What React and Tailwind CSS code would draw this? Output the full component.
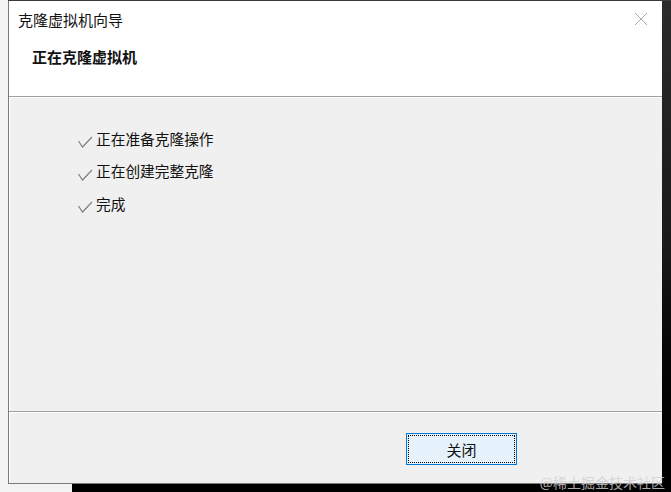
export default function App() {
  const font = { fontFamily: '"Noto Sans CJK SC", "Microsoft YaHei", sans-serif' };
  const items = ["正在准备克隆操作", "正在创建完整克隆", "完成"];
  return (
    <div className="relative w-[671px] h-[492px] bg-black overflow-hidden" style={font}>
      <div className="absolute left-0 top-0 w-[8px] h-full bg-[#f3f3f3]" />
      <div className="absolute left-0 bottom-0 w-[72px] h-[9px] bg-[#f3f3f3]" />
      <div className="absolute right-0 top-0 w-[9px] h-full bg-linear-to-b from-[#2b2b2b] via-[#1a1a1a] to-black" />
      <div className="absolute left-[8px] top-0 right-0 h-px bg-[#3a3a3a]" />

      <div className="relative ml-[8px] mt-[1px] w-[654px] h-[483px] border-l border-b border-[#7a7a7a] flex flex-col text-[#111]">
        <div className="h-[95px] bg-white flex flex-col shrink-0">
          <div className="h-[36px] flex items-center justify-between pl-[9px] pr-[14px]">
            <span className="text-[15px] leading-none">克隆虚拟机向导</span>
            <svg width="14" height="14" viewBox="0 0 14 14">
              <path d="M1 1 L13 13 M13 1 L1 13" stroke="#a8a8a8" strokeWidth="1" fill="none" />
            </svg>
          </div>
          <div className="h-[38px] flex items-center pl-[23px]">
            <span className="text-[15px] font-bold leading-none">正在克隆虚拟机</span>
          </div>
        </div>
        <div className="h-px bg-[#a0a0a0] shrink-0" />
        <div className="h-px bg-white shrink-0" />
        <div className="flex-1 bg-[#f0f0f0] pt-[25px] pl-[68px] border-l border-white">
          {items.map((t) => (
            <div key={t} className="h-[32.5px] flex items-center">
              <svg width="15" height="12" viewBox="0 0 15 12" className="mt-[6px] mr-[3px]">
                <polyline points="0.5,5 4.5,11 14,1" stroke="#7a7a7a" strokeWidth="1.1" fill="none" />
              </svg>
              <span className="text-[14.7px] leading-none">{t}</span>
            </div>
          ))}
        </div>
        <div className="h-px bg-[#a0a0a0] shrink-0" />
        <div className="h-px bg-white shrink-0" />
        <div className="h-[70px] bg-[#f0f0f0] shrink-0 flex justify-end items-start pt-[20px] pr-[145px] border-l border-white">
          <button className="w-[111px] h-[32px] border border-[#0078d7] bg-[#e5f1fb] p-[1px]">
            <div className="w-full h-full border border-dotted border-black flex items-center justify-center text-[15px] leading-none">
              关闭
            </div>
          </button>
        </div>
      </div>

      <div className="absolute right-[6px] bottom-[3px] text-[14px] leading-none text-[#d0d0d0] opacity-80">
        @稀土掘金技术社区
      </div>
    </div>
  );
}
